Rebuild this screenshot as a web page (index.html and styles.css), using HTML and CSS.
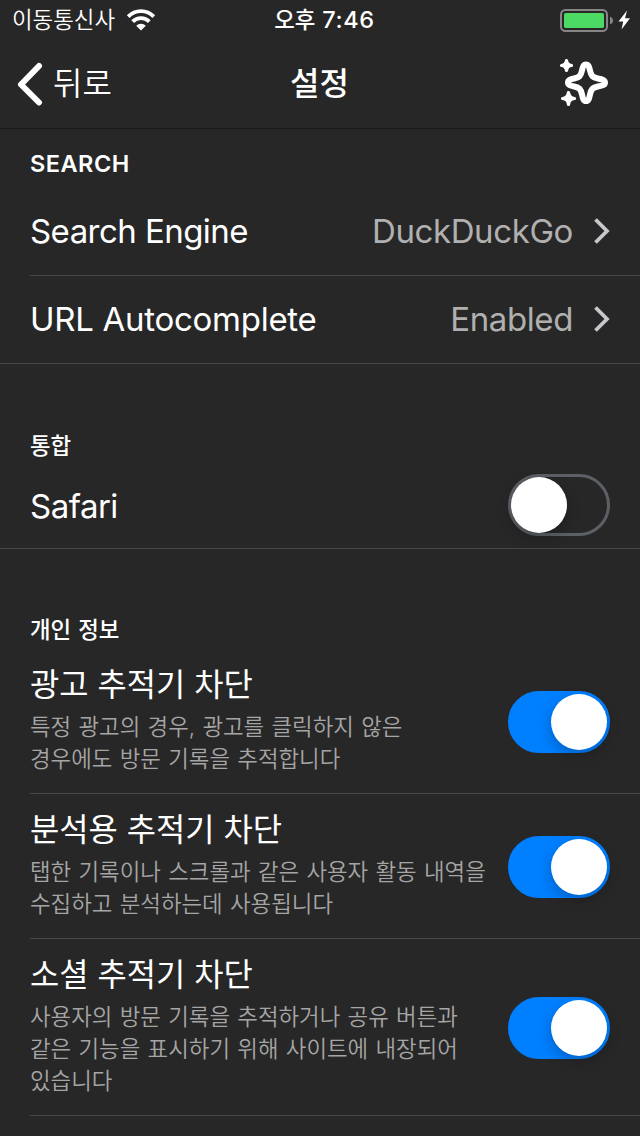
FILE: index.html
```html
<!DOCTYPE html>
<html lang="ko">
<head>
<meta charset="utf-8">
<title>설정</title>
<link rel="stylesheet" href="styles.css">
</head>
<body>
<header>
  <div class="status">
    <div class="carrier"><span class="carrier-name">이동통신사</span>
      <svg class="wifi" width="30" height="22" viewBox="0 0 30 22"><g fill="none" stroke="#fff" stroke-width="3.800"><path d="M2.200 7.600a17.800 17.800 0 0 1 25.600 0"/><path d="M6.700 12.600a11.500 11.500 0 0 1 16.600 0"/></g><path d="M15 21.500l-4.800-4.700a6.800 6.800 0 0 1 9.600 0z" fill="#fff"/></svg>
    </div>
    <time class="clock"><span class="clock-period">오후</span> 7:46</time>
    <svg class="battery" width="74" height="26" viewBox="0 0 74 26"><rect x="1" y="3" width="46" height="21" rx="4.500" fill="none" stroke="#858585" stroke-width="2"/><rect x="4" y="6" width="40" height="15" rx="1.800" fill="#4cd964"/><path d="M50 9.700c2 .5 3 2 3 3.800s-1 3.300-3 3.800z" fill="#858585"/><path d="M67 3.500L58.500 14.500h4.700L61.500 22.500 70 11.300h-5z" fill="#fff"/></svg>
  </div>
  <nav class="nav">
    <a class="back"><svg width="26" height="44" viewBox="0 0 26 44"><path d="M22 4L4 22.500l18 18" fill="none" stroke="#fff" stroke-width="6" stroke-linecap="round" stroke-linejoin="round"/></svg><span>뒤로</span></a>
    <h1 class="title">설정</h1>
    <svg class="sparkle" width="50" height="50" viewBox="0 0 50 50"><path d="M28 6.200c2.500 0 3.100 2 3.900 5.800 1.200 5.600 2.700 7.300 7.900 8.300 4.600.9 7.200 1.400 7.200 4s-2.600 3.100-7.200 4c-5.200 1-6.700 2.700-7.900 8.300-.8 3.800-1.400 6.300-3.900 6.300s-3.100-2.500-3.900-6.300c-1.200-5.600-2.700-7.300-7.900-8.300-3.900-.8-6.200-1.400-6.200-4s2.300-3.200 6.200-4c5.200-1 6.700-2.700 7.900-8.300.8-3.800 1.400-5.800 3.900-5.800z" transform="translate(-1 .2)" fill="none" stroke="#fff" stroke-width="6"/><g fill="#fff" stroke="#fff" stroke-width="3.200" stroke-linejoin="round"><path d="M7.500 2.500q.5 4.500 5 5-4.500.5-5 5-.5-4.500-5-5 4.500-.5 5-5z"/><path d="M9.500 34.500q.5 5.500 6 6-5.500.5-6 6-.5-5.500-6-6 5.500-.5 6-6z"/></g></svg>
  </nav>
</header>
<main>
  <section class="search">
    <h2 class="heading latin-heading">SEARCH</h2>
    <div class="row link-row"><span class="engine">Search Engine</span><span class="value">DuckDuckGo</span><svg class="chevron" width="18" height="28" viewBox="0 0 18 28"><path d="M2.500 2.500L14 14 2.500 25.500" fill="none" stroke="#c7c7cc" stroke-width="3.800"/></svg></div>
    <div class="row link-row last"><span>URL Autocomplete</span><span class="value">Enabled</span><svg class="chevron" width="18" height="28" viewBox="0 0 18 28"><path d="M2.500 2.500L14 14 2.500 25.500" fill="none" stroke="#c7c7cc" stroke-width="3.800"/></svg></div>
  </section>
  <section class="integration">
    <h2 class="heading">통합</h2>
    <div class="row safari-row last"><span>Safari</span><div class="switch"><span class="knob"></span></div></div>
  </section>
  <section class="privacy">
    <h2 class="heading">개인 정보</h2>
    <div class="row option"><div><h3 class="option-title">광고 추적기 차단</h3><p class="description">특정 광고의 경우, 광고를 클릭하지 않은<br>경우에도 방문 기록을 추적합니다</p></div><div class="switch on"><span class="knob"></span></div></div>
    <div class="row option"><div><h3 class="option-title">분석용 추적기 차단</h3><p class="description">탭한 기록이나 스크롤과 같은 사용자 활동 내역을<br>수집하고 분석하는데 사용됩니다</p></div><div class="switch on"><span class="knob"></span></div></div>
    <div class="row option"><div><h3 class="option-title">소셜 추적기 차단</h3><p class="description">사용자의 방문 기록을 추적하거나 공유 버튼과<br>같은 기능을 표시하기 위해 사이트에 내장되어<br>있습니다</p></div><div class="switch on"><span class="knob"></span></div></div>
  </section>
</main>
</body>
</html>
```
FILE: styles.css
```css
* { box-sizing: border-box; }
body { margin: 0; height: 1136px; overflow: hidden; background: #272727; color: #fff; font-family: Inter, "Noto Sans CJK KR", sans-serif; }
h1, h2, h3, p { margin: 0; }
svg { display: block; flex: none; }
header { height: 129px; border-bottom: 1px solid #1a1a1a; }
.status { height: 40px; display: grid; grid-template-columns: 1fr auto 1fr; align-items: center; padding: 0 6px 0 12px; }
.carrier { display: flex; align-items: center; gap: 11px; font-size: 22.400px; font-weight: 350; line-height: 40px; }
.wifi { margin-bottom: 1px; }
.clock { font-size: 23.500px; font-weight: 550; line-height: 40px; letter-spacing: .6px; white-space: nowrap; padding-left: 3px; }
.clock-period { font-size: 22.400px; font-weight: 500; letter-spacing: 0; }
.battery { justify-self: end; margin-bottom: 1px; }
.nav { height: 88px; display: grid; grid-template-columns: 1fr auto 1fr; align-items: center; padding: 0 31px 0 17px; }
.back { display: flex; align-items: center; gap: 10px; font-size: 32px; font-weight: 350; line-height: 44px; }
.title { font-size: 32px; line-height: 44px; font-weight: 500; margin-left: 13px; }
.sparkle { justify-self: end; margin-bottom: 3px; }
.row { display: flex; align-items: center; justify-content: space-between; margin-left: 30px; padding-right: 30px; border-bottom: 1px solid #48484a; font-size: 33px; letter-spacing: -.28px; white-space: nowrap; }
.row.last { margin-left: 0; padding-left: 30px; }
.heading { padding-left: 30px; font-size: 22.400px; line-height: 40px; font-weight: 500; word-spacing: 1px; }
.latin-heading { font-size: 23.500px; letter-spacing: .5px; font-weight: 600; }
.search { padding-top: 15px; }
.search .heading { height: 44px; }
.link-row { height: 88px; padding-right: 29px; padding-bottom: 2px; }
.engine { letter-spacing: -.55px; }
.value { margin-left: auto; margin-right: 20px; color: #b0b0b0; letter-spacing: -.4px; }
.integration { padding-top: 62px; }
.safari-row { height: 83px; padding-bottom: 2px; letter-spacing: -.5px; }
.safari-row .switch { margin-bottom: 2px; }
.privacy { padding-top: 61px; }
.privacy .heading { height: 39px; }
.option { padding-top: 16px; padding-bottom: 18px; letter-spacing: 0; }
.option-title { font-size: 31.800px; line-height: 40px; font-weight: 400; padding-bottom: 6px; }
.description { color: #a5a5a5; font-size: 22.400px; line-height: 32px; font-weight: 350; word-spacing: 1px; }
.switch { flex: none; width: 102px; height: 62px; display: flex; align-items: center; border: 3px solid #5c6066; border-radius: 31px; }
.knob { width: 56px; height: 56px; border-radius: 50%; background: #fff; box-shadow: 0 5px 14px rgba(0,0,0,.24); }
.switch.on { justify-content: flex-end; margin-top: 3px; border-color: #007fff; background: #007fff; }
```
